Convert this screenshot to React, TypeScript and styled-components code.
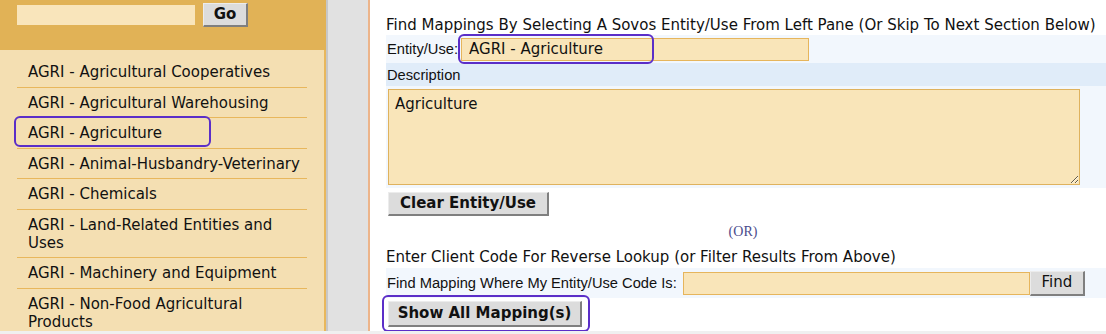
import React from "react";
import styled, { createGlobalStyle } from "styled-components";

const GlobalStyle = createGlobalStyle`
  html, body {
    margin: 0;
    padding: 0;
    background: #f0f0f0;
    font-family: "DejaVu Sans", Verdana, sans-serif;
    color: #111;
  }
`;

const categories = [
  "AGRI - Agricultural Cooperatives",
  "AGRI - Agricultural Warehousing",
  "AGRI - Agriculture",
  "AGRI - Animal-Husbandry-Veterinary",
  "AGRI - Chemicals",
  "AGRI - Land-Related Entities and Uses",
  "AGRI - Machinery and Equipment",
  "AGRI - Non-Food Agricultural Products",
];

const Page = styled.div`
  display: flex;
  height: 331px;
  overflow: hidden;
  background: #fff;
`;

const Sidebar = styled.div`
  width: 326px;
  flex-shrink: 0;
  display: flex;
  flex-direction: column;
`;

const SearchBar = styled.div`
  height: 50px;
  flex-shrink: 0;
  box-sizing: border-box;
  background: #e1b256;
  display: flex;
  align-items: flex-start;
  gap: 8px;
  padding: 3px 0 0 17px;
`;

const SearchInput = styled.input`
  width: 178px;
  height: 20px;
  margin-top: 2px;
  box-sizing: border-box;
  border: none;
  background: #f9e5bb;
  outline: none;
`;

const Button = styled.button<{ $bold?: boolean; $size?: number }>`
  font-family: "DejaVu Sans", Verdana, sans-serif;
  font-size: ${(p) => p.$size ?? 14}px;
  font-weight: ${(p) => (p.$bold ? 700 : 400)};
  color: #111;
  background: #dcdcdc;
  border-style: solid;
  border-width: 1px 2px 2px 1px;
  border-color: #ececec #7f7f7f #7f7f7f #ececec;
  padding: 0;
  box-sizing: border-box;
  line-height: 1;
  white-space: nowrap;
  cursor: pointer;
`;

const GoButton = styled(Button)`
  width: 45px;
  height: 24px;
`;

const List = styled.ul`
  flex: 1;
  margin: 0;
  padding: 7px 17px 0;
  list-style: none;
  background: #f4dfb2;
  border-right: 2px solid #e8b75c;
`;

const Item = styled.li`
  position: relative;
  padding: 6px 0 5.5px 11px;
  font-size: 15px;
  line-height: 18px;
  border-bottom: 1px solid #e8b75c;
  &:last-child {
    border-bottom: none;
  }
`;

const Highlight = styled.span<{ $l: number; $t: number; $w: number; $h: number }>`
  position: absolute;
  left: ${(p) => p.$l}px;
  top: ${(p) => p.$t}px;
  width: ${(p) => p.$w}px;
  height: ${(p) => p.$h}px;
  box-sizing: border-box;
  border: 2px solid #5b2ec8;
  border-radius: 6px;
  pointer-events: none;
`;

const Gutter = styled.div`
  width: 40px;
  flex-shrink: 0;
  background: #e1e1e1;
  border-left: 2px solid #c7c7c7;
  border-right: 2px solid #ecb48a;
`;

const Main = styled.div`
  flex: 1;
  padding: 15px 0 0 16px;
  display: flex;
  flex-direction: column;
  align-items: flex-start;
  & > * {
    flex-shrink: 0;
  }
`;

const Heading = styled.div`
  font-size: 15px;
  line-height: 20px;
  white-space: nowrap;
`;

const Row = styled.div<{ $bg: string; $h?: number }>`
  align-self: stretch;
  display: flex;
  align-items: center;
  background: ${(p) => p.$bg};
  ${(p) => (p.$h ? `height: ${p.$h}px;` : "")}
`;

const Label = styled.span`
  font-family: "Liberation Sans", Arial, sans-serif;
  font-size: 14.7px;
  padding-left: 1px;
  white-space: nowrap;
`;

const FieldWrap = styled.span<{ $gap: number }>`
  position: relative;
  display: inline-flex;
  margin-left: ${(p) => p.$gap}px;
`;

const TextInput = styled.input<{ $w: number }>`
  width: ${(p) => p.$w}px;
  height: 23px;
  box-sizing: border-box;
  border: 1px solid #e6b55c;
  background: #f9e5b9;
  font-family: "DejaVu Sans", Verdana, sans-serif;
  font-size: 15px;
  color: #111;
  padding: 0 7px;
  outline: none;
`;

const TextArea = styled.textarea`
  width: 692px;
  height: 96px;
  box-sizing: border-box;
  margin: 3px 0 3px 2px;
  border: 1px solid #dfb25e;
  background: #f9e5b9;
  font-family: "DejaVu Sans", Verdana, sans-serif;
  font-size: 15px;
  color: #111;
  padding: 5px 6px;
  outline: none;
`;

const ClearButton = styled(Button)`
  margin: 4px 0 0 2px;
  height: 24px;
  width: 161px;
`;

const OrText = styled.div`
  align-self: stretch;
  text-align: center;
  font-family: "Liberation Serif", "Times New Roman", serif;
  font-size: 14px;
  line-height: 16px;
  color: #4b4b8c;
  margin-top: 8px;
  padding-right: 6px;
`;

const SubHeading = styled(Heading)`
  margin-top: 7px;
`;

const FindButton = styled(Button)`
  width: 55px;
  height: 25px;
  font-size: 15px;
`;

const ShowWrap = styled.div`
  position: relative;
  margin: 3px 0 0 2px;
`;

const ShowButton = styled(Button)`
  width: 194px;
  height: 26px;
  font-size: 15px;
`;

export default function App() {
  return (
    <>
      <GlobalStyle />
      <Page>
        <Sidebar>
          <SearchBar>
            <SearchInput />
            <GoButton $bold $size={15}>Go</GoButton>
          </SearchBar>
          <List>
            {categories.map((c) => (
              <Item key={c}>
                {c}
                {c === "AGRI - Agriculture" && (
                  <Highlight $l={-3} $t={-2} $w={197} $h={31} />
                )}
              </Item>
            ))}
          </List>
        </Sidebar>
        <Gutter />
        <Main>
          <Heading>
            Find Mappings By Selecting A Sovos Entity/Use From Left Pane (Or Skip To Next Section Below)
          </Heading>
          <Row $bg="#f2f7fd" $h={28}>
            <Label>Entity/Use:</Label>
            <FieldWrap $gap={3}>
              <TextInput $w={348} defaultValue="AGRI - Agriculture" />
              <Highlight $l={-3} $t={-4} $w={196} $h={30} />
            </FieldWrap>
          </Row>
          <Row $bg="#e0ecf9" $h={23}>
            <Label>Description</Label>
          </Row>
          <Row $bg="#f2f7fd">
            <TextArea defaultValue="Agriculture" />
          </Row>
          <ClearButton $bold $size={15}>Clear Entity/Use</ClearButton>
          <OrText>(OR)</OrText>
          <SubHeading>Enter Client Code For Reverse Lookup (or Filter Results From Above)</SubHeading>
          <Row $bg="#f2f7fd" $h={30} style={{ marginTop: 1 }}>
            <Label>Find Mapping Where My Entity/Use Code Is:</Label>
            <FieldWrap $gap={6}>
              <TextInput $w={347} />
            </FieldWrap>
            <FindButton>Find</FindButton>
          </Row>
          <ShowWrap>
            <ShowButton $bold>Show All Mapping(s)</ShowButton>
            <Highlight $l={-6} $t={-6} $w={208} $h={37} />
          </ShowWrap>
        </Main>
      </Page>
    </>
  );
}
